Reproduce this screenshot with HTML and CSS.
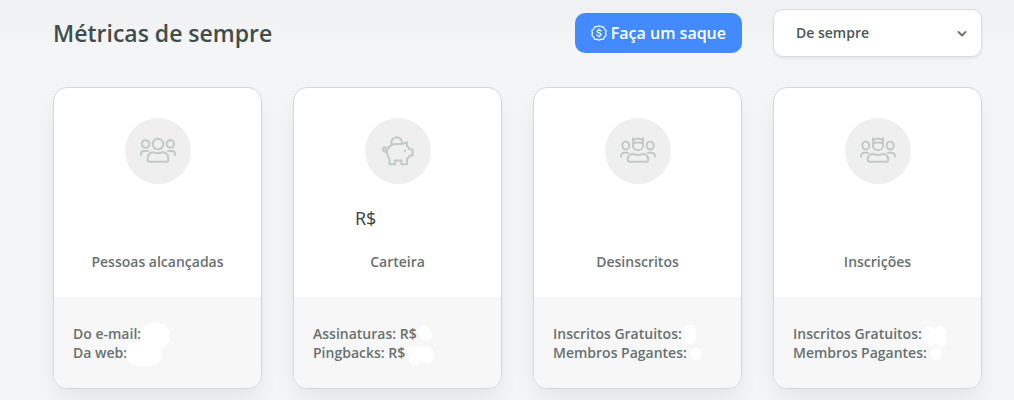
FILE: index.html
```html
<!DOCTYPE html>
<html lang="pt-BR">
<head>
    <meta charset="utf-8">
    <title>Métricas</title>
    <meta name="viewport" content="width=device-width, initial-scale=1">
    <link rel="stylesheet" href="styles.css">
</head>
<body>
    <main class="metrics">
        <header class="grid toolbar">
            <h1>Métricas de sempre</h1>
            <button class="withdraw" type="button">
                <svg class="coin" viewBox="0 0 16 16" width="16" height="16" aria-hidden="true">
                    <path d="M8 .8 L10 1.6 L12.4 1.8 L13.4 3.9 L15.2 5.6 L14.6 8 L15.2 10.4 L13.4 12.1 L12.4 14.2 L10 14.4 L8 15.2 L6 14.4 L3.6 14.2 L2.6 12.1 L.8 10.4 L1.4 8 L.8 5.6 L2.6 3.9 L3.6 1.8 L6 1.6 Z"/>
                    <path d="M10 6 C9.7 4.9 6.2 4.6 6.2 6.4 C6.2 8.2 10 7.6 10 9.6 C10 11.4 6.3 11.2 6 9.9 M8 3.9 V5.1 M8 10.9 V12.1"/>
                </svg>
                Faça um saque
            </button>
            <div class="period">
                <select aria-label="Período">
                    <option>De sempre</option>
                </select>
                <svg class="chevron" viewBox="0 0 10 8" width="10" height="8" aria-hidden="true"><path d="M1.5 2 L5 5.5 L8.5 2"/></svg>
            </div>
        </header>

        <section class="grid">
            <article class="card">
                <div class="card-top">
                    <div class="circle">
                        <svg viewBox="0 0 36 28" width="36" height="28" aria-hidden="true">
                            <circle cx="18" cy="7" r="5.3"/>
                            <circle cx="5.6" cy="7" r="3.8"/>
                            <circle cx="30.4" cy="7" r="3.8"/>
                            <path d="M1 18 V17 Q1 14 4 14 H8 M35 18 V17 Q35 14 32 14 H28"/>
                            <path d="M13.2 15.2 Q18 17.4 22.8 15.2 Q28.2 15.8 28.2 21 V23 Q28.2 24.8 26.4 24.8 H9.6 Q7.8 24.8 7.8 23 V21 Q7.8 15.8 13.2 15.2 Z"/>
                        </svg>
                    </div>
                    <div class="value"></div>
                    <h2>Pessoas alcançadas</h2>
                </div>
                <div class="card-bottom">
                    <p>Do e-mail:</p>
                    <p>Da web:</p>
                    <svg class="mask" viewBox="0 0 200 91" width="200" height="91" aria-hidden="true">
                        <rect x="86" y="26" width="30" height="26" rx="13"/>
                        <rect x="72" y="44" width="36" height="25" rx="12"/>
                    </svg>
                </div>
            </article>

            <article class="card">
                <div class="card-top">
                    <div class="circle">
                        <svg viewBox="0 0 32 30" width="32" height="30" aria-hidden="true">
                            <path d="M9.6 8.4 A5.4 5.4 0 1 1 20 8"/>
                            <path d="M9.6 9 Q12 8 14.5 8 H20.5 L25 6.2 V10 Q26.8 11.3 27.6 13.5 H30.6 V19.5 H27.8 Q27 21.6 25 22.8 V28.2 H19.4 V24.4 H13 V28.2 H7.6 V22.8 Q5 20.2 5 16.5 Q5 11.5 9.6 9 Z"/>
                            <path d="M5 16 Q1 16 1 12.8 Q1.2 11 3 11.2 Q4.2 11.8 3.4 13.1 M23 14.8 V15"/>
                        </svg>
                    </div>
                    <div class="value balance">R$</div>
                    <h2>Carteira</h2>
                </div>
                <div class="card-bottom">
                    <p>Assinaturas: R$</p>
                    <p>Pingbacks: R$</p>
                    <svg class="mask" viewBox="0 0 200 91" width="200" height="91" aria-hidden="true">
                        <circle cx="130" cy="35" r="6"/>
                        <circle cx="132" cy="38" r="6"/>
                        <circle cx="119" cy="55" r="6"/>
                        <circle cx="121" cy="62" r="6"/>
                        <circle cx="133" cy="55" r="6"/>
                        <circle cx="134" cy="60" r="6"/>
                        <rect x="119" y="50" width="14" height="14"/>
                    </svg>
                </div>
            </article>

            <article class="card">
                <div class="card-top">
                    <div class="circle">
                        <svg viewBox="0 0 36 28" width="36" height="28" aria-hidden="true">
                            <path d="M13 1.2 L15.5 2.6 L18 1.2 L20.5 2.6 L23 1.2 V8.4 C23 15 13 15 13 8.4 Z M13 6.2 Q18 4.8 23 6.2"/>
                            <ellipse cx="5.8" cy="8.6" rx="3.5" ry="4"/>
                            <ellipse cx="30.2" cy="8.6" rx="3.5" ry="4"/>
                            <path d="M1 19.5 Q1 15.8 4.5 15.8 H8 M35 19.5 Q35 15.8 31.5 15.8 H28"/>
                            <path d="M13 16.8 Q18 19 23 16.8 Q28.2 17.3 28.2 22.5 Q28.2 24.8 26.2 24.8 H9.8 Q7.8 24.8 7.8 22.5 Q7.8 17.3 13 16.8 Z"/>
                        </svg>
                    </div>
                    <div class="value"></div>
                    <h2>Desinscritos</h2>
                </div>
                <div class="card-bottom">
                    <p>Inscritos Gratuitos:</p>
                    <p>Membros Pagantes:</p>
                    <svg class="mask" viewBox="0 0 200 91" width="200" height="91" aria-hidden="true">
                        <circle cx="156" cy="34" r="6"/>
                        <circle cx="156" cy="41" r="6"/>
                        <circle cx="162" cy="57" r="6"/>
                    </svg>
                </div>
            </article>

            <article class="card">
                <div class="card-top">
                    <div class="circle">
                        <svg viewBox="0 0 36 28" width="36" height="28" aria-hidden="true">
                            <path d="M13 1.2 L15.5 2.6 L18 1.2 L20.5 2.6 L23 1.2 V8.4 C23 15 13 15 13 8.4 Z M13 6.2 Q18 4.8 23 6.2"/>
                            <ellipse cx="5.8" cy="8.6" rx="3.5" ry="4"/>
                            <ellipse cx="30.2" cy="8.6" rx="3.5" ry="4"/>
                            <path d="M1 19.5 Q1 15.8 4.5 15.8 H8 M35 19.5 Q35 15.8 31.5 15.8 H28"/>
                            <path d="M13 16.8 Q18 19 23 16.8 Q28.2 17.3 28.2 22.5 Q28.2 24.8 26.2 24.8 H9.8 Q7.8 24.8 7.8 22.5 Q7.8 17.3 13 16.8 Z"/>
                        </svg>
                    </div>
                    <div class="value"></div>
                    <h2>Inscrições</h2>
                </div>
                <div class="card-bottom">
                    <p>Inscritos Gratuitos:</p>
                    <p>Membros Pagantes:</p>
                    <svg class="mask" viewBox="0 0 200 91" width="200" height="91" aria-hidden="true">
                        <circle cx="155" cy="35" r="6"/>
                        <circle cx="156" cy="43" r="6"/>
                        <circle cx="166" cy="35" r="6"/>
                        <circle cx="167" cy="44" r="6"/>
                        <circle cx="162" cy="57" r="6"/>
                    </svg>
                </div>
            </article>
        </section>
    </main>
</body>
</html>
```
FILE: styles.css
```css
* { margin: 0; padding: 0; box-sizing: border-box; }
body {
    font: 600 14px/19px "Open Sans", "Noto Sans", sans-serif;
    color: #68716f;
    background: #f4f5f7 linear-gradient(#eff0f2, #f4f5f7 50px) no-repeat;
}
svg { display: block; fill: none; stroke-linecap: round; stroke-linejoin: round; }

.metrics { padding: 9px 32px 11px 53px; }
.grid { display: grid; grid-template-columns: repeat(4, 1fr); column-gap: 31px; }

/* Toolbar */
.toolbar { align-items: center; margin-bottom: 30px; }
h1 { grid-column: span 2; font-size: 23px; line-height: 32px; font-weight: 600; color: #414d4b; }
.withdraw {
    justify-self: end;
    display: flex;
    align-items: center;
    gap: 4px;
    height: 40px;
    padding: 0 16px;
    border: 0;
    border-radius: 10px;
    background: #438aff;
    color: #fff;
    font: 600 16px/22px "Open Sans", "Noto Sans", sans-serif;
    white-space: nowrap;
    cursor: pointer;
}
.coin { stroke: #fff; stroke-width: 1.2; }
.period { position: relative; }
.period select {
    appearance: none;
    display: block;
    width: 100%;
    height: 48px;
    padding: 0 32px 1px 22px;
    border: 1px solid #d9dcde;
    border-radius: 10px;
    background: #fff;
    box-shadow: 0 2px 3px rgba(0, 0, 0, 0.06);
    color: #4c5755;
    font: inherit;
}
.chevron { position: absolute; right: 15px; top: 21px; stroke: #77736c; stroke-width: 2; pointer-events: none; }

/* Cards */
.card {
    border: 1px solid #d3d6d8;
    border-radius: 14px;
    background: #fff;
    box-shadow: 0 12px 24px -4px rgba(0, 0, 0, 0.08);
    overflow: hidden;
}
.card-top { display: flex; flex-direction: column; align-items: center; padding: 30px 16px 26px; }
.circle {
    display: flex;
    align-items: center;
    justify-content: center;
    width: 66px;
    height: 66px;
    border-radius: 50%;
    background: #efefef;
}
.circle svg { stroke: #c3c9c7; stroke-width: 2; }
.value { width: 100%; height: 24px; margin: 22px 0; font-size: 18px; line-height: 24px; font-weight: 400; color: #36413f; }
.balance { padding-left: 45px; }
h2 { font-size: 14px; line-height: 19px; font-weight: 600; }
.card-bottom { position: relative; padding: 27px 19px 26px; background: #f7f7f7; }
.mask { position: absolute; left: 0; top: 0; fill: #fff; }
```
